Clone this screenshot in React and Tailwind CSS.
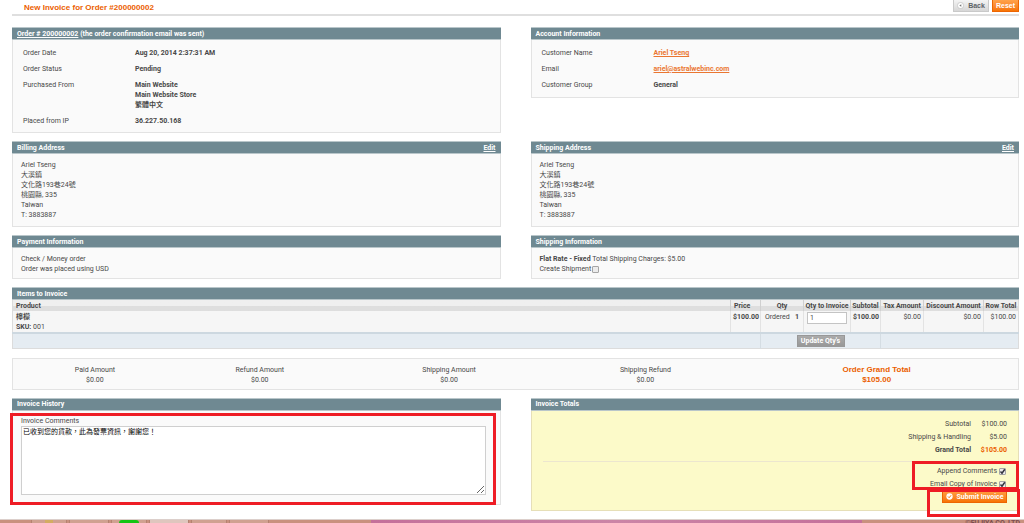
import { useState } from 'react'
import clsx from 'clsx'

const ADDRESS = ['Ariel Tseng', '大溪鎮', '文化路193巷24號', '桃園縣, 335', 'Taiwan', 'T: 3883887']

const AMOUNTS = [
  { label: 'Paid Amount',       value: '$0.00' },
  { label: 'Refund Amount',     value: '$0.00' },
  { label: 'Shipping Amount',   value: '$0.00' },
  { label: 'Shipping Refund',   value: '$0.00' },
  { label: 'Order Grand Total', value: '$105.00', grand: true },
]

const TOTALS = [
  { label: 'Subtotal',            value: '$100.00' },
  { label: 'Shipping & Handling', value: '$5.00' },
]

const PanelHead = ({ children, action }) => (
  <div className="flex h-[13px] items-center justify-between border-y border-[#b9c6ca] bg-[#6f8992] px-[5px] font-bold leading-[10px] text-white">
    <h2>{children}</h2>
    {action && <a href="#edit" className="underline">{action}</a>}
  </div>
)

const Panel = ({ title, action, className, children }) => (
  <section className="relative">
    <PanelHead action={action}>{title}</PanelHead>
    <div className={clsx('border border-t-0', className || 'border-[#e3e3e3] bg-[#fafafa] px-2 pb-1 pt-[6px]')}>
      {children}
    </div>
  </section>
)

const InfoTable = ({ rows }) => (
  <table className="w-full table-fixed text-left align-top">
    <tbody>
      {rows.map(([label, value]) => (
        <tr key={label} className="align-top">
          <th scope="row" className="w-[112px] py-[3px] font-normal">{label}</th>
          <td className="py-[3px] font-bold">{value}</td>
        </tr>
      ))}
    </tbody>
  </table>
)

const Address = () => (
  <address className="pb-[2px] not-italic">
    {ADDRESS.map((line) => <div key={line}>{line}</div>)}
  </address>
)

const Highlight = ({ className }) => (
  <div className={clsx('pointer-events-none absolute border-[3px] border-[#ee1c25]', className)} />
)

const Check = ({ id, label, checked, onChange }) => (
  <div className="flex h-[13px] items-center justify-end gap-[2px] pr-px">
    <label htmlFor={id}>{label}</label>
    <span className="relative flex">
      <input
        id={id}
        type="checkbox"
        checked={checked}
        onChange={onChange}
        className="size-[7px] appearance-none rounded-[1px] border border-[#a5a5a5] bg-[#ececec]"
      />
      {checked && (
        <svg viewBox="0 0 7 7" className="pointer-events-none absolute inset-0 size-[7px]">
          <path d="M1.5 3.6 L3 5.2 L5.8 1.2" fill="none" stroke="#33333f" strokeWidth="1.5" />
        </svg>
      )}
    </span>
  </div>
)

const ItemsTable = () => {
  const [qty, setQty] = useState('1')
  const head = 'border-l border-[#d0d0d0] text-center font-bold'
  const cell = 'border-l border-[#e3e3e3] px-[2px] pt-px text-right'

  return (
    <table className="w-full table-fixed border-collapse border border-t-0 border-[#dcdcdc]">
      <colgroup>
        <col />
        <col className="w-[30px]" />
        <col className="w-[43px]" />
        <col className="w-[47px]" />
        <col className="w-[30px]" />
        <col className="w-[43px]" />
        <col className="w-[60px]" />
        <col className="w-[35px]" />
      </colgroup>
      <thead>
        <tr className="h-[11px] whitespace-nowrap bg-linear-to-b from-[#efefef] from-50% to-[#dedede] to-50%">
          <th className="px-[3px] text-left font-bold">Product</th>
          <th className="border-l border-[#d0d0d0] px-[3px] text-left font-bold">Price</th>
          <th className={head}>Qty</th>
          <th className={head}>Qty to Invoice</th>
          <th className={head}>Subtotal</th>
          <th className={head}>Tax Amount</th>
          <th className={head}>Discount Amount</th>
          <th className={head}>Row Total</th>
        </tr>
      </thead>
      <tbody>
        <tr className="h-[22px] bg-[#f6f6f6] align-top">
          <td className="px-[3px] pt-px">
            <div className="font-bold">檸檬</div>
            <div><strong>SKU:</strong> 001</div>
          </td>
          <td className={clsx(cell, 'font-bold')}>$100.00</td>
          <td className={cell}>
            <div className="flex justify-between px-[2px]"><span>Ordered</span><strong>1</strong></div>
          </td>
          <td className={cell}>
            <input
              type="text"
              aria-label="Qty to Invoice"
              value={qty}
              onChange={(e) => setQty(e.target.value)}
              className="mx-auto block h-3 w-10 border border-[#c4c4c4] bg-white px-[2px]"
            />
          </td>
          <td className={clsx(cell, 'font-bold')}>$100.00</td>
          <td className={cell}>$0.00</td>
          <td className={cell}>$0.00</td>
          <td className={cell}>$100.00</td>
        </tr>
      </tbody>
      <tfoot>
        <tr className="h-[15px] border-t-2 border-[#cdd8e0] bg-[#e5ecf2]">
          <td colSpan={2} />
          <td colSpan={3} className="border-l border-[#d5dde3] text-center">
            <button type="button" className="mx-auto block h-3 w-12 whitespace-nowrap border border-[#989898] bg-linear-to-b from-[#ababab] to-[#989898] font-bold leading-[10px] text-white">
              Update Qty's
            </button>
          </td>
          <td colSpan={3} className="border-l border-[#d5dde3]" />
        </tr>
      </tfoot>
    </table>
  )
}

const Taskbar = () => (
  <footer className="mt-2 flex h-1 overflow-hidden border-t border-[#dccfcb] bg-[#c9917f] leading-[6px]">
    <div className="flex w-[371px] gap-[2px] pl-[31px]">
      <span className="flex w-9 justify-center border-x border-[#b58271] bg-[#d0a191]"><i className="w-2 bg-[#d3ac62]" /></span>
      <span className="w-10 border-x border-[#b58271] bg-[#d0a191]" />
      <span className="flex w-9 justify-center border-x border-[#b58271] bg-[#d0a191]"><i className="w-5 rounded-t bg-[#14c514]" /></span>
      <span className="w-10 border-x border-[#b58271] bg-[#dfc6be]" />
      <span className="w-9 border-x border-[#b58271] bg-[#d0a191]" />
      <span className="w-10 border-x border-[#b58271] bg-[#d0a191]" />
    </div>
    <div className="w-[491px] bg-linear-to-r from-[#c4709a] via-[#cb85a6] to-[#c4709a]" />
    <div className="flex-1 whitespace-nowrap pr-1 text-right font-bold text-[#7b4d50]">©FUJIYA CO.,LTD</div>
  </footer>
)

const App = () => {
  const [comment, setComment] = useState('已收到您的貨款，此為發票資訊，謝謝您！')
  const [append, setAppend] = useState(true)
  const [email, setEmail] = useState(true)
  const [shipment, setShipment] = useState(false)

  return (
    <div className="overflow-hidden bg-white font-[Roboto,'Noto_Sans_CJK_TC',sans-serif] text-[7px] leading-[10px] text-[#484848]">
      <main className="pl-3 pr-[5px]">
        <header className="mb-[11px] flex h-4 items-start justify-between border-b-2 border-[#dfdfdf] pl-3">
          <h1 className="pt-[3px] font-['Liberation_Sans',sans-serif] text-[8px] font-bold text-[#eb5e00]">New Invoice for Order #200000002</h1>
          <div className="flex gap-[3px] font-['Liberation_Sans',sans-serif] font-bold">
            <button type="button" className="flex h-3 w-9 items-center justify-center gap-1 border border-t-0 border-[#c9c9c9] bg-linear-to-b from-[#f4f4f4] to-[#d6d6d6] text-[#5c6266]">
              <svg viewBox="0 0 8 8" className="size-[7px]">
                <circle cx="4" cy="4" r="3.5" fill="#fff" stroke="#b8b8b8" strokeWidth="0.7" />
                <path d="M2.6 4 L4.9 2.6 V5.4 Z" fill="#777" />
              </svg>
              Back
            </button>
            <button type="button" className="h-3 w-[27px] border border-t-0 border-[#ed6502] bg-linear-to-b from-[#ffa24a] to-[#f77400] text-white">
              Reset
            </button>
          </div>
        </header>

        <div className="grid grid-cols-2 items-start gap-x-[30px] gap-y-2">
          <Panel
            title={<><a href="#order" className="underline">Order # 200000002</a> (the order confirmation email was sent)</>}
            className="border-[#e3e3e3] bg-[#fafafa] px-[10px] pb-[3px] pt-[5px]"
          >
            <InfoTable
              rows={[
                ['Order Date', 'Aug 20, 2014 2:37:31 AM'],
                ['Order Status', 'Pending'],
                ['Purchased From', <>Main Website<br />Main Website Store<br />繁體中文</>],
                ['Placed from IP', '36.227.50.168'],
              ]}
            />
          </Panel>
          <Panel title="Account Information" className="border-[#e3e3e3] bg-[#fafafa] px-[10px] pb-1 pt-[5px]">
            <InfoTable
              rows={[
                ['Customer Name', <a href="#customer" className="text-[#ea7631] underline">Ariel Tseng</a>],
                ['Email', <a href="mailto:ariel@astralwebinc.com" className="text-[#ea7631] underline">ariel@astralwebinc.com</a>],
                ['Customer Group', 'General'],
              ]}
            />
          </Panel>

          <Panel title="Billing Address" action="Edit"><Address /></Panel>
          <Panel title="Shipping Address" action="Edit"><Address /></Panel>

          <Panel title="Payment Information">
            <p>Check / Money order</p>
            <p>Order was placed using USD</p>
          </Panel>
          <Panel title="Shipping Information">
            <p><strong>Flat Rate - Fixed</strong> Total Shipping Charges: $5.00</p>
            <div className="flex h-[10px] items-center gap-px">
              <label htmlFor="shipment">Create Shipment</label>
              <input
                id="shipment"
                type="checkbox"
                checked={shipment}
                onChange={(e) => setShipment(e.target.checked)}
                className="size-[7px] appearance-none rounded-[1px] border border-[#a5a5a5] bg-[#ececec] checked:bg-[#555]"
              />
            </div>
          </Panel>
        </div>

        <section className="mt-2">
          <PanelHead>Items to Invoice</PanelHead>
          <ItemsTable />
        </section>

        <dl className="mt-[9px] grid grid-cols-[164fr_166fr_213fr_180fr_283fr] border border-[#e3e3e3] bg-[#fafafa] pb-1 pt-[6px] text-center">
          {AMOUNTS.map(({ label, value, grand }) => (
            <div key={label} className={clsx(grand && "font-['Liberation_Sans',sans-serif] text-[8px] font-bold text-[#eb5e00]")}>
              <dt>{label}</dt>
              <dd>{value}</dd>
            </div>
          ))}
        </dl>

        <div className="mt-2 grid grid-cols-2 items-start gap-x-[30px]">
          <Panel title="Invoice History" className="border-[#e3e3e3] bg-[#fafafa] px-2 py-[5px]">
            <label htmlFor="comments" className="block">Invoice Comments</label>
            <div className="pb-1 pr-[6px]">
              <textarea
                id="comments"
                value={comment}
                onChange={(e) => setComment(e.target.value)}
                className="block h-[69px] w-full border border-[#cfcfcf] bg-white px-px text-black"
              />
            </div>
            <Highlight className="-left-[2px] right-[5px] top-[15px] bottom-0" />
          </Panel>

          <Panel title="Invoice Totals" className="border-[#e6dfb8] bg-[#fcfac9] px-[11px] pb-[7px] pt-[7px]">
            <table className="w-full text-right">
              <tbody>
                {TOTALS.map(({ label, value }) => (
                  <tr key={label} className="h-[13px]">
                    <th scope="row" className="font-normal">{label}</th>
                    <td className="w-9">{value}</td>
                  </tr>
                ))}
                <tr className="h-[13px] font-bold">
                  <th scope="row">Grand Total</th>
                  <td className="w-9 text-[#eb5e00]">$105.00</td>
                </tr>
              </tbody>
            </table>
            <hr className="mb-[3px] mt-1 border-[#ece6cf]" />
            <Check id="append" label="Append Comments" checked={append} onChange={(e) => setAppend(e.target.checked)} />
            <Check id="email" label="Email Copy of Invoice" checked={email} onChange={(e) => setEmail(e.target.checked)} />
            <div className="flex justify-end">
              <button type="button" className="flex h-3 w-[65px] items-center justify-center gap-1 whitespace-nowrap border border-[#ed6502] bg-linear-to-b from-[#ff9a3c] to-[#f77400] font-bold text-white">
                <svg viewBox="0 0 8 8" className="size-[7px]">
                  <circle cx="4" cy="4" r="3.6" fill="#fff" />
                  <path d="M2.3 4 L3.6 5.4 L5.8 2.6" fill="none" stroke="#f77400" strokeWidth="1.1" />
                </svg>
                Submit Invoice
              </button>
            </div>
            <Highlight className="right-0 top-[63px] h-[29px] w-[107px]" />
            <Highlight className="-right-px -bottom-[6px] h-[28px] w-[93px]" />
          </Panel>
        </div>
      </main>
      <Taskbar />
    </div>
  )
}

export default App
